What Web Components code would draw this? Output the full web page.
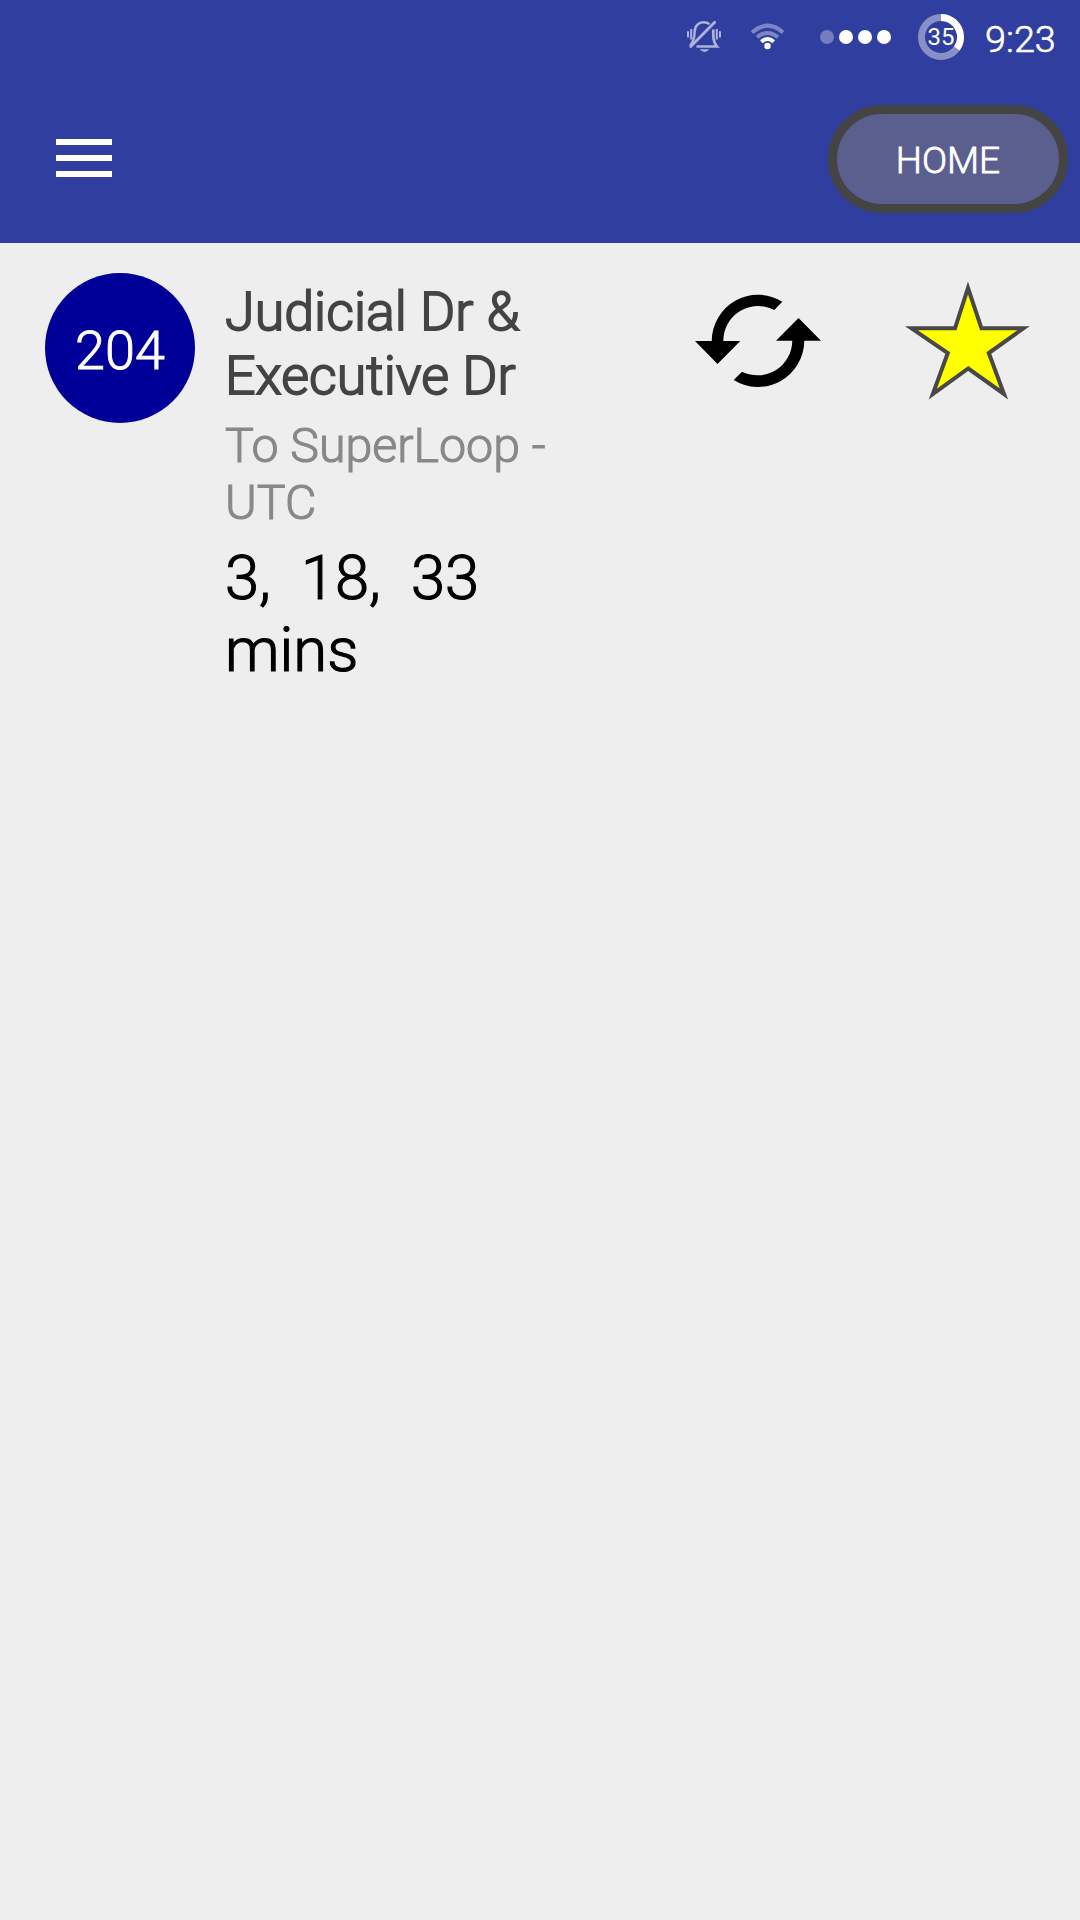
<!DOCTYPE html>
<html lang="en"><head><meta charset="utf-8"><title>Stops</title>
<style>html,body{margin:0;background:#eee;font-family:Roboto,sans-serif;font-weight:300}</style></head>
<body><transit-app></transit-app>
<script>
const def=(n,h)=>customElements.define(n,class extends HTMLElement{constructor(){super();this.attachShadow({mode:'open'}).innerHTML=h}});
def('battery-ring',`<style>:host,div{display:grid;width:46px;height:46px;place-items:center}svg,span{grid-area:1/1}svg{display:block}span{font-size:24px;font-weight:400;line-height:28px;color:#fff;padding-bottom:1px}</style><div><svg width="46" height="46"><g fill="none" stroke-width="7"><circle cx="23" cy="23" r="19.5" stroke="#8890c8"/><path d="M23 3.5A19.5 19.5 0 0 1 38.78 34.46" stroke="#fff"/></g></svg><span><slot></slot></span></div>`);
def('status-bar',`<style>
:host{display:flex;height:75px;align-items:flex-start;justify-content:flex-end;color:#fff}
svg{display:block;flex:none}battery-ring{margin-top:14px}.clock{font-size:37.8px;line-height:46px;margin:16px 0 0 21px;width:95px;white-space:nowrap;-webkit-text-stroke:.6px #fff}</style>
<svg width="248" height="75" viewBox="0 0 248 75">
<g fill="none" stroke="#adb3dc" stroke-width="2.4"><path d="M20 45.5C23.5 42 24.6 38 24.6 32C24.6 26 28.5 22.3 33.5 22.3C36 22.3 38 22.9 39.5 24.2"/><path d="M43.3 29.5V35C43.3 41 44.5 43.5 47 46.5H26.5" stroke-width="2.7"/><path d="M20.7 46.5L44.7 22.2" stroke-width="2.8" stroke-linecap="round"/><path d="M18 31.2V37.5M21.2 29V39.5M46.8 29V39.5M50 31.2V37.5" stroke-width="2"/></g>
<path d="M29.8 49.3H39.2Q37.5 52 34.5 52T29.8 49.3Z" fill="#adb3dc"/>
<g fill="none" stroke-width="4"><path d="M82 32.4Q97.5 19 113 32.4" stroke="#7d86c4"/><path d="M87 37.3Q97.5 28.7 108 37.3" stroke="#7d86c4"/><path d="M91.3 41.8Q97.5 36.2 103.7 41.8" stroke="#fff"/></g><circle cx="97.5" cy="46" r="3.2" fill="#fff"/>
<circle cx="157" cy="37" r="7" fill="#737cbf"/><g fill="#fff"><circle cx="176" cy="37" r="7"/><circle cx="195" cy="37" r="7"/><circle cx="214" cy="37" r="7"/></g></svg>
<battery-ring>35</battery-ring><div class="clock">9:23</div>`);
def('menu-button',`<style>:host{display:flex;flex-direction:column;gap:10px;width:56px}i{height:6px;background:#fff}</style><i></i><i></i><i></i>`);
def('pill-button',`<style>:host{display:flex;box-sizing:border-box;width:240px;height:108px;border:9px solid #444;border-radius:54px;background:#5a5f8d;color:#fff;font-size:37px;line-height:46px;align-items:center;justify-content:center;padding-top:3px;-webkit-text-stroke:.8px #fff}</style><slot></slot>`);
def('app-header',`<style>:host{display:block;height:243px;background:#303f9f}.bar{display:flex;height:168px;box-sizing:border-box;padding:30px 12px 0 56px;justify-content:space-between;align-items:flex-start}menu-button{margin-top:34px}</style><status-bar></status-bar><div class="bar"><menu-button></menu-button><pill-button>HOME</pill-button></div>`);
def('route-badge',`<style>:host{display:flex;flex:none;box-sizing:border-box;padding-top:5px;width:150px;height:150px;border-radius:50%;background:#009;color:#fff;align-items:center;justify-content:center;font-size:54px;line-height:64px;-webkit-text-stroke:.9px #fff}</style><slot></slot>`);
def('stop-info',`<style>:host{display:block;width:360px}.t{font-size:53.8px;line-height:64px;color:#444;-webkit-text-stroke:1.8px #444}.d{font-size:48.3px;line-height:56.7px;color:#888;margin-top:10px;-webkit-text-stroke:1.1px #888}.m{font-size:61.5px;line-height:72px;color:#000;margin-top:11px;white-space:pre;-webkit-text-stroke:1.2px #000}</style><div class="t">Judicial Dr &amp;<br>Executive Dr</div><div class="d">To SuperLoop -<br>UTC</div><div class="m">3,  18,  33<br>mins</div>`);
def('refresh-icon',`<style>:host,svg{display:block}</style><svg width="160" height="140"><path d="M31.7 71A46.3 46.8 0 0 1 102.3 31.7L94.3 40A34.8 35 0 0 0 43.3 71H60.3L37.5 94L15 71ZM124.3 70.7A46.3 46.8 0 0 1 53.7 110L62 101.7A34.8 35 0 0 0 112.3 70.7H96L118.5 48L141 70.7Z"/></svg>`);
def('star-icon',`<style>:host,svg{display:block}</style><svg width="160" height="140"><path d="M78 18L91.5 58.3H133.5L98.8 83L114 124L78.3 98.5L42.8 124L57.8 83L21.5 58.3H65Z" fill="#ff0" stroke="#484848" stroke-width="4"/></svg>`);
def('stop-row',`<style>:host{display:flex;padding:30px 30px 0 45px;align-items:flex-start}stop-info{margin:7px 0 0 30px}refresh-icon{margin:-3px 0 0 95px}star-icon{margin:-3px 0 0 50px}</style><route-badge>204</route-badge><stop-info></stop-info><refresh-icon></refresh-icon><star-icon></star-icon>`);
def('transit-app',`<style>:host{display:block;height:1920px}</style><app-header></app-header><stop-row></stop-row>`);
</script></body></html>
